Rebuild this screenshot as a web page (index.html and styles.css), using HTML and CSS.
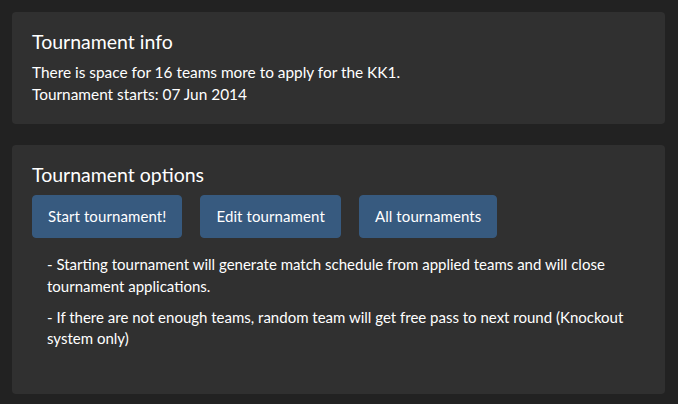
FILE: index.html
```html
<!DOCTYPE html>
<html>
<head>
<meta charset="utf-8">
<link rel="stylesheet" href="styles.css">
</head>
<body>
<div class="well">
  <h4 class="title">Tournament info</h4>
  <p class="info">There is space for 16 teams more to apply for the KK1.<br>Tournament starts: 07 Jun 2014</p>
</div>
<div class="well well-options">
  <h4 class="title title-options">Tournament options</h4>
  <div class="actions">
    <a class="btn">Start tournament!</a>
    <a class="btn">Edit tournament</a>
    <a class="btn">All tournaments</a>
  </div>
  <div class="notes">
    <p>- Starting tournament will generate match schedule from applied teams and will close tournament applications.</p>
    <p>- If there are not enough teams, random team will get free pass to next round (Knockout system only)</p>
  </div>
</div>
</body>
</html>
```

FILE: styles.css
```css
html, body {
  margin: 0;
  padding: 0;
}
body {
  background: #222222;
  color: #ffffff;
  font-family: Lato, "Open Sans", sans-serif;
  font-size: 15px;
  line-height: 1.428571;
  padding: 12px 13px 0 12px;
}
.well {
  background: #303030;
  border-radius: 4px;
  padding: 19px 20px 19px 20px;
  margin-bottom: 21px;
}
.title {
  margin: 0 0 10px 0;
  font-size: 19.5px;
  font-weight: 400;
  line-height: 1.1;
}
.title-options {
  margin-bottom: 9px;
}
.info {
  margin: 0;
  font-size: 15.4px;
  line-height: 21.4px;
}
.actions {
  display: flex;
  gap: 18px;
}
.btn {
  display: inline-block;
  background: #375a7f;
  color: #ffffff;
  border: 1px solid #375a7f;
  border-radius: 4px;
  padding: 10px 15px;
  font-size: 15px;
  line-height: 1.428571;
  letter-spacing: 0.1px;
  cursor: pointer;
}
.notes {
  padding-left: 15px;
  margin-top: 16px;
}
.notes p {
  margin: 0 0 10px 0;
}
.well-options {
  padding-bottom: 34px;
  margin-bottom: 0;
}
```
